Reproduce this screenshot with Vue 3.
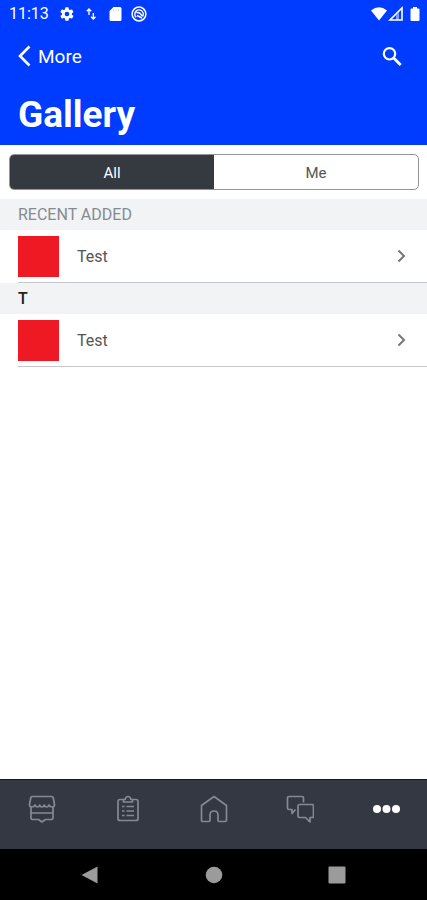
<script setup>
import { ref } from 'vue'

const filter = ref('All')
const filters = ['All', 'Me']
const sections = [
  { title: 'RECENT ADDED', muted: true, items: ['Test'] },
  { title: 'T', muted: false, items: ['Test'] },
]
</script>

<template>
  <div class="screen">
    <header class="header">
      <div class="status">
        <span class="clock">11:13</span>
        <div class="status-left">
          <svg width="16" height="16" viewBox="0 0 24 24" fill="#fff"><path fill-rule="evenodd" d="M19.4 13a7.500 7.500 0 0 0 0-2l2.100-1.600a.5.5 0 0 0 .1-.6l-2-3.500a.5.5 0 0 0-.6-.2l-2.500 1a7 7 0 0 0-1.700-1l-.4-2.600a.5.5 0 0 0-.5-.5h-4a.5.5 0 0 0-.5.5L9 5.100a7 7 0 0 0-1.700 1l-2.500-1a.5.5 0 0 0-.6.2l-2 3.500a.5.5 0 0 0 .1.600L4.500 11a7.500 7.500 0 0 0 0 2l-2.200 1.600a.5.5 0 0 0-.1.600l2 3.500c.1.200.4.300.6.200l2.500-1a7 7 0 0 0 1.700 1l.4 2.600c0 .3.200.5.5.5h4c.3 0 .5-.2.5-.5l.4-2.600a7 7 0 0 0 1.700-1l2.500 1c.2.100.5 0 .6-.2l2-3.500a.5.5 0 0 0-.1-.6zM12 8.500a3.500 3.500 0 1 1 0 7 3.500 3.500 0 0 1 0-7z" /></svg>
          <svg width="16" height="16" viewBox="0 0 16 16" fill="none" stroke="#fff" stroke-width="1.300"><path d="M6 9V3M3.800 5.300 6 3l2.200 2.300M10.300 7v6M8.100 10.700l2.200 2.300 2.200-2.300" /></svg>
          <svg width="16" height="16" viewBox="0 0 16 16"><path d="M6.500 1H13q1.500 0 1.500 1.500v11Q14.500 15 13 15H4q-1.500 0-1.500-1.500V5z" fill="#fff" /><path d="M6.500 3.200v2M9 3.200v2M11.500 3.200v2" stroke="#c9d4ff" /></svg>
          <svg width="16" height="16" viewBox="0 0 16 16" fill="none" stroke="#fff"><circle cx="8" cy="8" r="6.900" stroke-width="1.500" /><path d="M5.200 11.200A4.200 4.200 0 1 1 11.500 10.500M5.500 6.800q3-1.500 5.500 3.200M6 9.500l5 2.500" stroke-width="1.500" /></svg>
        </div>
        <div class="status-right">
          <svg width="16" height="16" viewBox="0 0 16 16" fill="#fff"><path d="M0 4.500Q8-2 16 4.500L8 14.500z" /></svg>
          <svg width="16" height="16" viewBox="0 0 16 16"><path d="M14 2v12H2z" fill="none" stroke="#fff" stroke-width="1.600" /><path d="M11 6.500V14H8V9.500z" fill="#fff" opacity=".5" /></svg>
          <svg width="10" height="16" viewBox="0 0 10 16" fill="#fff"><path d="M3 1h4v1.500h1.500q1 0 1 1V14q0 1-1 1h-7q-1 0-1-1V3.500q0-1 1-1H3z" /></svg>
        </div>
      </div>
      <div class="toolbar">
        <button class="back" type="button">
          <svg width="14" height="24" viewBox="0 0 14 24" fill="none" stroke="#fff" stroke-width="2.600"><path d="M11.500 1.500 2 11l9.500 9.500" /></svg>
          <span>More</span>
        </button>
        <button class="search" type="button" aria-label="Search">
          <svg width="22" height="22" viewBox="0 0 22 22" fill="none" stroke="#fff"><circle cx="8.500" cy="7.800" r="5.700" stroke-width="2.200" /><path d="m12.700 12 7 7" stroke-width="2.800" /></svg>
        </button>
      </div>
      <h1>Gallery</h1>
    </header>

    <main class="content">
      <div class="segments">
        <button v-for="name in filters" :key="name" type="button" :class="{ active: filter === name }" :aria-pressed="filter === name" @click="filter = name">{{ name }}</button>
      </div>
      <section v-for="section in sections" :key="section.title">
        <h2 :class="{ muted: section.muted }">{{ section.title }}</h2>
        <ul>
          <li v-for="item in section.items" :key="item">
            <a href="#">
              <span class="thumb"></span>
              <span class="name">{{ item }}</span>
              <svg width="10" height="14" viewBox="0 0 10 14" fill="none" stroke="#777" stroke-width="2"><path d="m1.500 1.500 5.500 5.500-5.500 5.500" /></svg>
            </a>
          </li>
        </ul>
      </section>
    </main>

    <nav class="tabs">
      <a href="#" aria-label="Store">
        <svg width="28" height="28" viewBox="0 0 28 28"><path d="M4 1.500h20q1 0 1.200 1l1.300 7q0 2.500-2.200 2.500T21 10q-.6 2-2.400 2t-2.300-2q-.6 2-2.300 2t-2.300-2q-.6 2-2.300 2T7 10q-1 2-3.300 2t-2.200-2.500l1.300-7q.2-1 1.200-1zM3 12v11q0 1.500 1.500 1.500h6L14 27l3.500-2.500h6q1.500 0 1.500-1.500V12M3 18h22" /></svg>
      </a>
      <a href="#" aria-label="Tasks">
        <svg width="28" height="28" viewBox="0 0 28 28"><path d="M9.500 4.500H6q-2 0-2 2v17q0 2 2 2h16q2 0 2-2v-17q0-2-2-2h-3.500M9.500 7V4.500h1.700q.4-3 2.800-3t2.800 3h1.700V7zM8 11.500h2.500M12.500 11.500H20M8 16h2.500M12.500 16H20M8 20.500h2.500M12.500 20.500H20" /></svg>
      </a>
      <a href="#" aria-label="Home">
        <svg width="28" height="28" viewBox="0 0 28 28"><path d="M1.500 10.500 14 1.500l12.500 9v14.700q0 1.300-1.300 1.300h-6q-1.200 0-1.200-1.300V20q0-4-4-4t-4 4v5.200q0 1.300-1.200 1.300h-6q-1.300 0-1.300-1.300z" /></svg>
      </a>
      <a href="#" aria-label="Messages">
        <svg width="28" height="28" viewBox="0 0 28 28"><path d="M12 12.500V11q0-1.500 1.500-1.500H26q1.500 0 1.500 1.500v10q0 1.500-1.500 1.500h-2V27l-4.500-4.500h-6Q12 22.500 12 21v-8.500M9.500 14.500 6 18.500v-4H3Q1.500 14.500 1.500 13V3Q1.500 1.500 3 1.500h13q1.500 0 1.500 1.500v4.500" /></svg>
      </a>
      <a href="#" aria-label="More">
        <svg class="dots" width="28" height="28" viewBox="0 0 28 28"><circle cx="5" cy="14" r="4" /><circle cx="14.500" cy="14" r="4" /><circle cx="24" cy="14" r="4" /></svg>
      </a>
    </nav>

    <div class="system">
      <button type="button" aria-label="Back"><svg width="18" height="18" viewBox="0 0 18 18"><path d="M16.500.5v17L.5 9z" /></svg></button>
      <button type="button" aria-label="Home"><svg width="18" height="18" viewBox="0 0 18 18"><circle cx="9" cy="9" r="8.300" /></svg></button>
      <button type="button" aria-label="Overview"><svg width="18" height="18" viewBox="0 0 18 18"><rect x=".5" y=".5" width="17" height="17" rx="1" /></svg></button>
    </div>
  </div>
</template>

<style>
body {
  margin: 0;
  background: #fff;
}
</style>

<style scoped>
.screen {
  display: flex;
  flex-direction: column;
  min-height: 100vh;
  font-family: Roboto, "Liberation Sans", sans-serif;
  color: #555;
}
button {
  padding: 0;
  border: 0;
  background: none;
  font: inherit;
  color: inherit;
}
a {
  color: inherit;
  text-decoration: none;
}
svg {
  display: block;
  flex: none;
}
.header {
  background: #003cff;
  color: #fff;
}
.status {
  display: flex;
  align-items: center;
  height: 28px;
  padding: 0 7px 0 9px;
}
.clock {
  width: 50px;
  font-size: 16px;
  line-height: 28px;
}
.status-left {
  display: flex;
  flex: 1;
  gap: 8px;
}
.status-right {
  display: flex;
  gap: 1px;
}
.status-right svg:last-child {
  margin-left: 5px;
}
.toolbar {
  display: flex;
  align-items: center;
  justify-content: space-between;
  height: 58px;
  padding: 0 24px 0 18px;
}
.back {
  display: flex;
  align-items: center;
  gap: 6px;
  font-size: 19px;
  line-height: 24px;
}
h1 {
  margin: 0;
  padding: 7px 18px 8px;
  font-size: 37px;
  line-height: 44px;
  font-weight: 700;
}
.content {
  flex: 1;
}
.segments {
  display: flex;
  height: 34px;
  margin: 9px 8px 9px 9px;
  border: 1px solid #929496;
  border-radius: 5px;
  overflow: hidden;
}
.segments button {
  flex: 1;
  padding-top: 2px;
  font-size: 15px;
}
.segments .active {
  background: #343a40;
  color: #fff;
}
h2 {
  margin: 0;
  padding: 1px 18px 0;
  background: #f1f3f5;
  font-size: 16px;
  line-height: 30px;
  font-weight: 500;
  color: #222;
}
h2.muted {
  font-weight: 400;
  color: #868b90;
}
ul {
  margin: 0;
  padding: 0 0 0 18px;
  list-style: none;
}
li a {
  display: flex;
  align-items: center;
  gap: 18px;
  height: 52px;
  padding-right: 20px;
  border-bottom: 1px solid #c4c6c8;
}
.thumb {
  width: 41px;
  height: 41px;
  background: #ef1923;
}
.name {
  flex: 1;
  font-size: 16px;
}
.tabs {
  display: flex;
  gap: 3px;
  height: 69px;
  border-top: 1px solid #15181f;
  background: #343842;
}
.tabs a {
  display: flex;
  flex: 1;
  justify-content: center;
  padding-top: 15px;
}
.tabs svg {
  fill: none;
  stroke: #858993;
  stroke-width: 1.7;
  stroke-linejoin: round;
}
.tabs .dots {
  fill: #fff;
  stroke: none;
}
.system {
  display: flex;
  height: 51px;
  padding: 0 28px;
  background: #000;
}
.system button {
  display: flex;
  flex: 1;
  align-items: center;
  justify-content: center;
}
.system svg {
  fill: #9b9b9b;
}
</style>
